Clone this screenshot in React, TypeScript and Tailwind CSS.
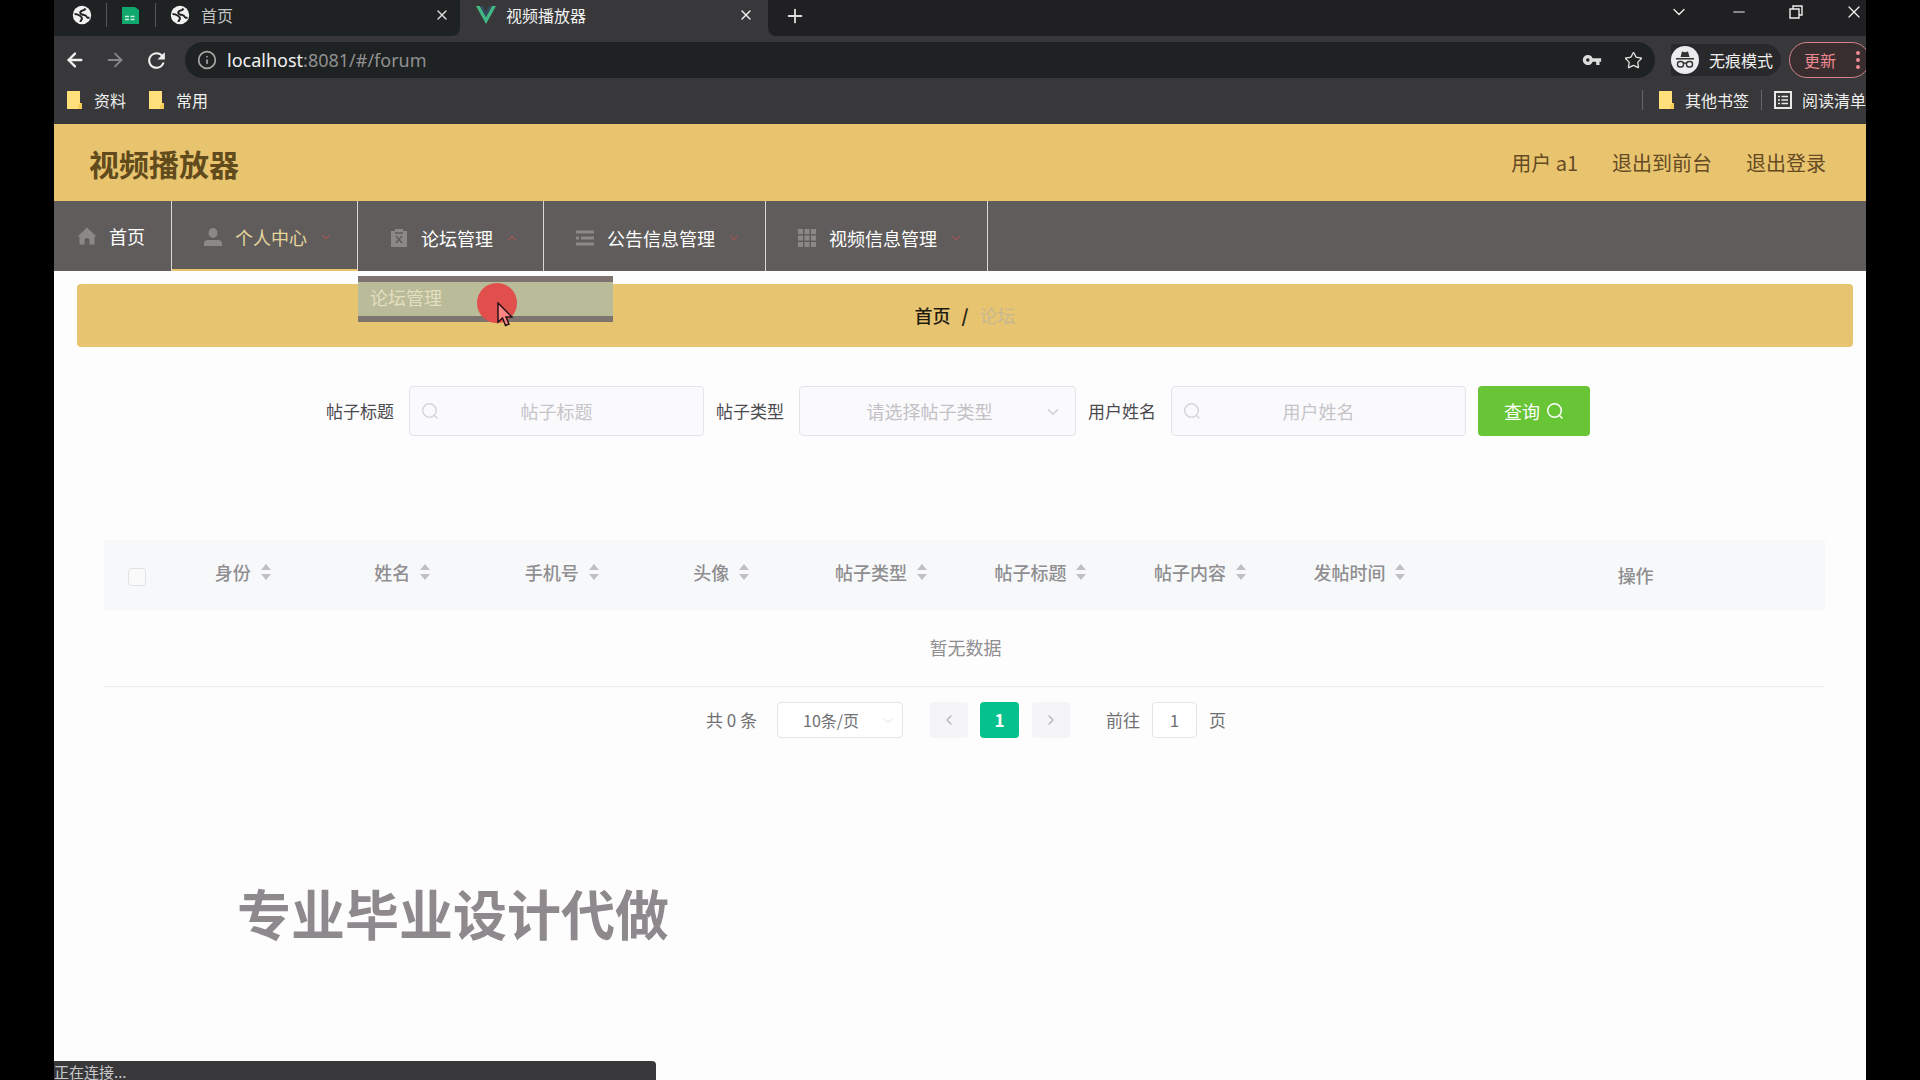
import type { ReactNode } from 'react'
import { ArrowLeft, ArrowRight, ChevronDown, ChevronLeft, ChevronRight, ChevronUp, Info, Minus, Plus, Star, X } from 'lucide-react'
import { MdRefresh, MdVpnKey } from 'react-icons/md'
import clsx from 'clsx'

const COLUMNS = ['身份', '姓名', '手机号', '头像', '帖子类型', '帖子标题', '帖子内容', '发帖时间']

function GlobeIcon() {
  return (
    <svg viewBox="0 0 20 20" className="size-5 shrink-0">
      <circle cx="10" cy="10" r="9.200" fill="#f1f1f1" />
      <path d="M13.500 3.500c-1 2-2 1.500-4 2.500s-1.500 3 .5 3.500 4 .5 4.500 2 2 1.500 3 1" fill="none" stroke="#222" strokeWidth="2" />
      <path d="M2.500 9c2 0 3.500 .5 5 1.500s2.500 1.500 2.500 3-1.500 1.500-1.500 3.500" fill="none" stroke="#222" strokeWidth="2" />
    </svg>
  )
}

function SheetIcon() {
  return (
    <svg viewBox="0 0 18 19" className="h-[19px] w-[18px] shrink-0">
      <path d="M1 1h13l4 3v14H1z" fill="#10a86c" />
      <path d="M4 10.500h4M9.500 10.500h4M4 13.500h4M9.500 13.500h4" stroke="#c9f0df" strokeWidth="1.500" />
    </svg>
  )
}

function VueIcon() {
  return (
    <svg viewBox="0 0 20 18" className="h-[18px] w-5 shrink-0">
      <path d="M0 0h4l6 11 6-11h4L10 18z" fill="#41b883" />
      <path d="M4 0h3l3 5.500L13 0h3l-6 11z" fill="#35495e" />
    </svg>
  )
}

function FolderIcon() {
  return (
    <svg viewBox="0 0 16 18" className="h-[18px] w-4 shrink-0">
      <path d="M1 0h13v12h2v6H1z" fill="#ffdf7b" />
      <path d="M14 12l-2 3v3h4v-6z" fill="#f6cd57" />
    </svg>
  )
}

function ReadingListIcon() {
  return (
    <svg viewBox="0 0 18 18" className="size-[18px] shrink-0" fill="none" stroke="#e8e8e8">
      <path d="M1 1h16v16H1z" strokeWidth="2" />
      <path d="M4 5.500h2M7.500 5.500H14M4 9h2M7.500 9H14M4 12.500h2M7.500 12.500H14" strokeWidth="1.500" />
    </svg>
  )
}

function IncognitoIcon() {
  return (
    <svg viewBox="0 0 28 28" className="size-7 shrink-0">
      <circle cx="14" cy="14" r="14" fill="#ececee" />
      <path d="M9.500 11l1.500-5.500 3 .8 3-.8L18.500 11zM5 12h18v1.500H5z" fill="#333" />
      <rect x="6.500" y="15.500" width="6" height="5.500" rx="2.500" fill="none" stroke="#333" strokeWidth="1.400" />
      <rect x="15.500" y="15.500" width="6" height="5.500" rx="2.500" fill="none" stroke="#333" strokeWidth="1.400" />
      <path d="M12.500 17.500q1.500-1 3 0" fill="none" stroke="#333" strokeWidth="1.400" />
    </svg>
  )
}

function RestoreIcon() {
  return (
    <svg viewBox="0 0 14 14" className="size-[14px]" fill="none" stroke="#eee" strokeWidth="1.400">
      <path d="M1 4h9v9H1zM4 4V1h9v9h-3" />
    </svg>
  )
}

function SearchIcon({ className }: { className?: string }) {
  return (
    <svg viewBox="0 0 18 18" className={clsx('size-[18px] shrink-0', className)} fill="none" stroke="currentColor" strokeWidth="1.500">
      <circle cx="8.500" cy="8.500" r="6.800" />
      <path d="M13 13l3.500 3.500" />
    </svg>
  )
}

const navIcons: Record<string, ReactNode> = {
  home: <path d="M10 1.500L.5 10.500h2V18.500H7.500V14q0-2 2.500-2t2.500 2v4.500h5v-8h2z" />,
  user: <path d="M10 1a4.500 5 0 0 1 0 10a4.500 5 0 0 1 0-10zM1 19v-2.500Q1 13 5 13h10q4 0 4 3.500V19z" />,
  board: (
    <>
      <path d="M2 3h4V1h8v2h4v16H2z" />
      <path d="M7 8l6 7M13 8l-6 7M6 5h8" stroke="#605c5c" strokeWidth="1.500" />
    </>
  ),
  list: <path d="M1 2.500h18v3H1zM1 8.500h3v3H1zM6 8.500h13v3H6zM1 14.500h18v3H1z" />,
  grid: <path d="M1 1h5v5H1zM7.500 1h5v5h-5zM14 1h5v5h-5zM1 7.500h5v5H1zM7.500 7.500h5v5h-5zM14 7.500h5v5h-5zM1 14h5v5H1zM7.500 14h5v5h-5zM14 14h5v5h-5z" />,
}

type NavItemProps = { icon: string; label: string; arrow?: 'up' | 'down'; active?: boolean; children?: ReactNode }

function NavItem({ icon, label, arrow, active, children }: NavItemProps) {
  const Arrow = arrow === 'up' ? ChevronUp : ChevronDown
  return (
    <li className={clsx('relative border-r border-[#d8d6d6]', active && 'border-b-2 border-b-[#e9c46f]')}>
      <a href="#/" className={clsx('flex h-full items-center text-lg', arrow ? 'pt-1 pr-6 pl-[31px]' : 'pr-[26px] pl-[23px]', active ? 'text-[#e6d79b]' : 'text-white')}>
        <svg viewBox="0 0 20 20" className="mr-3 size-5 text-[#8b8888]" fill="currentColor">
          {navIcons[icon]}
        </svg>
        {label}
        {arrow && <Arrow className="ml-3 size-[14px] text-[#9c5656]" strokeWidth={2} />}
      </a>
      {children}
    </li>
  )
}

function SortCaret() {
  return (
    <svg viewBox="0 0 10 16" className="h-4 w-[10px]" fill="#c0c0c2">
      <path d="M5 0l5 6H0zM5 16l5-6H0z" />
    </svg>
  )
}

function BrowserChrome() {
  return (
    <div className="overflow-hidden bg-[#38383a] text-base text-[#f0f0f0]">
      {/* Tabs */}
      <div className="flex h-9 bg-[#38383a]">
        <div className="flex w-[406px] items-center rounded-br-lg bg-[#1f2222] pr-[10px] pb-[6px] pl-[18px]">
          <GlobeIcon />
          <span className="mx-[14px] h-6 w-px bg-[#555]" />
          <SheetIcon />
          <span className="mr-[14px] ml-4 h-6 w-px bg-[#555]" />
          <GlobeIcon />
          <span className="ml-[11px] flex-1 text-[#c4c4c4]">首页</span>
          <button aria-label="关闭首页"><X className="size-4 text-[#ddd]" /></button>
        </div>
        <div className="flex w-[308px] items-center pr-[14px] pb-[6px] pl-4">
          <VueIcon />
          <span className="ml-[10px] flex-1">视频播放器</span>
          <button aria-label="关闭视频播放器"><X className="size-4" /></button>
        </div>
        <div className="flex flex-1 items-center rounded-bl-lg bg-[#202022] pr-[2px] pb-[5px] pl-4">
          <button aria-label="新标签页"><Plus className="size-[22px] text-[#ddd]" /></button>
          <div className="ml-auto flex items-center gap-[41px] pb-2">
            <button aria-label="搜索标签页"><ChevronDown className="size-5" strokeWidth={1.5} /></button>
            <button aria-label="最小化"><Minus className="size-[18px]" strokeWidth={1.5} /></button>
            <button aria-label="还原"><RestoreIcon /></button>
            <button aria-label="关闭"><X className="size-5" strokeWidth={1.5} /></button>
          </div>
        </div>
      </div>

      {/* Toolbar */}
      <div className="flex h-12 items-center pl-[10px]">
        <button aria-label="后退"><ArrowLeft className="size-[22px]" strokeWidth={2.5} /></button>
        <button aria-label="前进" className="ml-[18px]"><ArrowRight className="size-[22px] text-[#87878a]" /></button>
        <button aria-label="刷新" className="ml-[18px]"><MdRefresh className="size-[25px]" /></button>
        <div className="ml-4 flex h-9 flex-1 items-center rounded-full bg-[#1f2222] pr-3 pl-3">
          <Info className="size-5 text-[#a9a9a9]" />
          <div className="ml-[10px] flex-1 pb-px font-['Noto_Sans'] text-lg text-[#8f9090]">
            <span className="text-[#f2f2f2]">localhost</span>:8081/#/forum
          </div>
          <MdVpnKey className="size-5 text-[#ddd]" />
          <Star className="ml-[22px] size-[19px] text-[#ddd]" strokeWidth={1.7} />
        </div>
        <div className="ml-4 flex h-8 items-center rounded-r-full bg-[#29292b] pr-2">
          <IncognitoIcon />
          <span className="ml-[10px]">无痕模式</span>
        </div>
        <button className="-mr-1 ml-2 flex h-9 items-center rounded-full border border-[#d5828b] bg-[#382e30] pr-[9px] pl-[14px] text-[#f08991]">
          更新
          <svg viewBox="0 0 4 18" className="ml-5 h-[18px] w-1" fill="currentColor">
            <circle cx="2" cy="2" r="2" />
            <circle cx="2" cy="9" r="2" />
            <circle cx="2" cy="16" r="2" />
          </svg>
        </button>
      </div>

      {/* Bookmarks */}
      <div className="flex h-10 items-center pb-2 pl-3 whitespace-nowrap">
        <FolderIcon />
        <span className="mr-[22px] ml-3">资料</span>
        <FolderIcon />
        <span className="ml-3">常用</span>
        <span className="mr-[15px] ml-auto h-5 w-px bg-[#666]" />
        <FolderIcon />
        <span className="ml-[11px]">其他书签</span>
        <span className="mx-3 h-5 w-px bg-[#666]" />
        <ReadingListIcon />
        <span className="ml-[10px]">阅读清单</span>
      </div>
    </div>
  )
}

function SearchField({ id, label }: { id: string; label: string }) {
  return (
    <div className="flex items-center gap-[15px]">
      <label htmlFor={id}>{label}</label>
      <div className="relative">
        <SearchIcon className="absolute top-4 left-3 text-[#d6d6da]" />
        <input
          id={id}
          placeholder={label}
          className="h-[50px] w-[295px] rounded border border-[#e2e4ec] bg-[#fafafd] px-8 text-center text-lg placeholder:text-[#c6c4c8]"
        />
      </div>
    </div>
  )
}

export default function App() {
  return (
    <div className="min-h-screen bg-black px-[54px] font-['Noto_Sans_CJK_SC',sans-serif]">
      <div className="relative flex min-h-screen flex-col overflow-hidden bg-[#fefdfe]">
        <BrowserChrome />

        {/* Site header */}
        <header className="flex h-[77px] items-center gap-[34px] bg-[#e9c46f] pr-10 pl-[35px] text-xl text-[#654a24]">
          <h1 className="mr-auto text-3xl font-bold text-[#614b1c]">视频播放器</h1>
          <span>用户 a1</span>
          <a href="#/front">退出到前台</a>
          <a href="#/login">退出登录</a>
        </header>

        <nav className="h-[70px] bg-[#605c5c]">
          <ul className="flex h-full">
            <NavItem icon="home" label="首页" />
            <NavItem icon="user" label="个人中心" arrow="down" active />
            <NavItem icon="board" label="论坛管理" arrow="up">
              <div className="absolute top-[75px] left-0 z-10 h-[46px] w-[255px] border-y-[6px] border-[#7d7470] bg-[#babb98]">
                <a href="#/forum" className="block pt-px pl-3 text-lg text-[#e3dfc0]">论坛管理</a>
                <span className="absolute top-px left-[119px] size-10 rounded-full bg-[#e04f4b]" />
                <svg viewBox="0 0 16 25" className="absolute top-5 left-[139px] h-[25px] w-4">
                  <path d="M1 1v19l4.500-4 3 7.500 3.500-1.500-3-7h6z" fill="#ff8585" stroke="#241315" strokeWidth="1.500" />
                </svg>
              </div>
            </NavItem>
            <NavItem icon="list" label="公告信息管理" arrow="down" />
            <NavItem icon="grid" label="视频信息管理" arrow="down" />
          </ul>
        </nav>

        <main className="pt-[13px] pr-[13px] pl-[23px]">
          <div className="flex h-[63px] items-center justify-center gap-[11px] rounded bg-[#e7c570] pb-[2px] text-lg">
            <a href="#/" className="font-medium text-[#1f1b12]">首页</a>
            <span className="font-bold text-[#2b2517]">/</span>
            <span className="text-[#c9b793]">论坛</span>
          </div>

          <form className="mt-[39px] flex items-center justify-center gap-3 pr-[14px] text-[17px] text-[#4b4a4e]">
            <SearchField id="title" label="帖子标题" />
            <div className="flex items-center gap-[15px]">
              <label htmlFor="type">帖子类型</label>
              <div className="relative">
                <select
                  id="type"
                  className="h-[50px] w-[277px] appearance-none rounded border border-[#e2e4ec] bg-[#fafafd] pr-8 pl-4 text-center text-lg text-[#c2c0c4] [text-align-last:center]"
                >
                  <option>请选择帖子类型</option>
                </select>
                <ChevronDown className="pointer-events-none absolute top-[17px] right-[14px] size-[18px] text-[#c8c8cc]" strokeWidth={1.5} />
              </div>
            </div>
            <SearchField id="name" label="用户姓名" />
            <button type="button" className="flex h-[50px] items-center gap-[6px] rounded bg-[#67c536] px-[26px] text-lg text-white">
              查询
              <SearchIcon />
            </button>
          </form>

          <div className="mt-[104px] pr-7 pl-[27px]">
            <table className="w-full table-fixed text-lg text-[#8f8e90]">
              <colgroup>
                <col className="w-[58px]" />
                {COLUMNS.map((column) => (
                  <col key={column} className="w-[9.27%]" />
                ))}
                <col />
              </colgroup>
              <thead>
                <tr className="h-[70px] bg-[#f7f8fa]">
                  <th className="pt-1 pl-2">
                    <input type="checkbox" aria-label="全选" className="mx-auto block size-[18px] appearance-none rounded-sm border border-[#e2e2e2] bg-[#fafafa]" />
                  </th>
                  {COLUMNS.map((column) => (
                    <th key={column} className="pb-[6px] pl-[2px] font-medium">
                      <span className="flex items-center justify-center gap-[10px]">
                        {column}
                        <SortCaret />
                      </span>
                    </th>
                  ))}
                  <th className="pl-2 font-medium">操作</th>
                </tr>
              </thead>
              <tbody>
                <tr className="h-[76px] border-b border-[#ebebf2]">
                  <td colSpan={10} className="pb-[2px] pl-[2px] text-center">暂无数据</td>
                </tr>
              </tbody>
            </table>
          </div>

          {/* Pagination */}
          <div className="mt-[15px] flex items-center justify-center pl-[2px] text-[17px] text-[#707073]">
            <span>共 0 条</span>
            <div className="relative ml-5">
              <select aria-label="每页条数" className="h-9 w-[126px] appearance-none rounded border border-[#e6e4ea] bg-white pr-[18px] text-center text-base [text-align-last:center]">
                <option>10条/页</option>
              </select>
              <ChevronDown className="pointer-events-none absolute top-3 right-2 size-[14px] text-[#dcdce0]" strokeWidth={1.5} />
            </div>
            <button aria-label="上一页" className="ml-[27px] flex h-9 w-[38px] items-center justify-center rounded-sm bg-[#f5f4f6]">
              <ChevronLeft className="size-4 text-[#b5b5b8]" />
            </button>
            <button className="ml-3 h-9 w-[39px] rounded-sm bg-[#05c18e] font-bold text-white">1</button>
            <button aria-label="下一页" className="ml-[13px] flex h-9 w-[38px] items-center justify-center rounded-sm bg-[#f5f4f6]">
              <ChevronRight className="size-4 text-[#b5b5b8]" />
            </button>
            <label htmlFor="page" className="ml-9">前往</label>
            <input id="page" defaultValue="1" className="mr-3 ml-3 h-9 w-[45px] rounded border border-[#e6e4ea] bg-white text-center" />
            <span>页</span>
          </div>
        </main>

        <p className="absolute top-[873px] left-[183px] text-[54px] leading-[80px] font-bold text-[#8e898d]">专业毕业设计代做</p>
        <div className="absolute bottom-0 left-0 h-[19px] w-[602px] rounded-tr bg-[#38383a] text-[15px] leading-[22px] text-[#c9c9cc]">
          正在连接...
        </div>
      </div>
    </div>
  )
}
